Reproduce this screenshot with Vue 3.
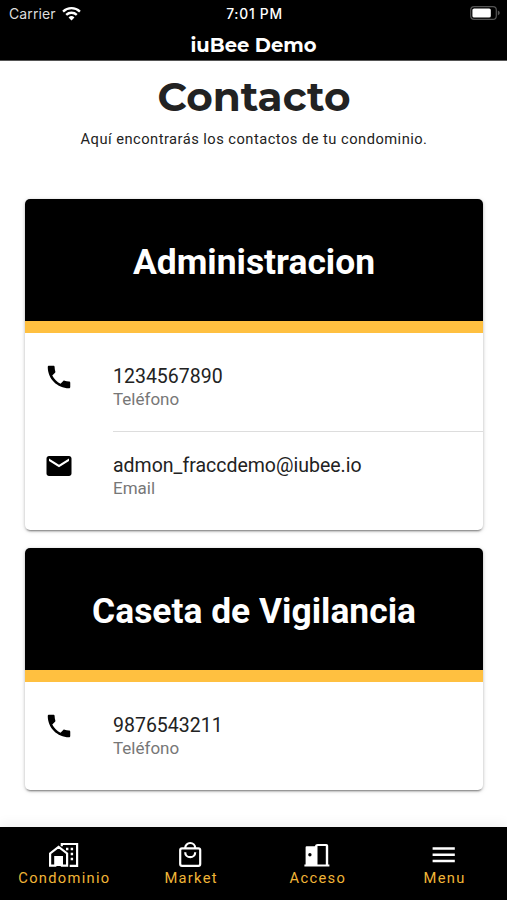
<script setup>
const cards = [
  {
    title: 'Administracion',
    rows: [
      { icon: 'phone', value: '1234567890', label: 'Teléfono' },
      { icon: 'mail', value: 'admon_fraccdemo@iubee.io', label: 'Email' },
    ],
  },
  {
    title: 'Caseta de Vigilancia',
    rows: [{ icon: 'phone', value: '9876543211', label: 'Teléfono' }],
  },
]
const paths = {
  phone: 'M6.62 10.79c1.44 2.83 3.76 5.14 6.59 6.59l2.2-2.2c.27-.27.67-.36 1.02-.24 1.12.37 2.33.57 3.57.57.55 0 1 .45 1 1V20c0 .55-.45 1-1 1C10.61 21 3 13.39 3 4c0-.55.45-1 1-1h3.5c.55 0 1 .45 1 1 0 1.25.2 2.45.57 3.57.11.35.03.74-.25 1.02l-2.2 2.2z',
  mail: 'M20 4H4c-1.1 0-2 .9-2 2v12c0 1.1.9 2 2 2h16c1.1 0 2-.9 2-2V6c0-1.1-.9-2-2-2zm0 4-8 5-8-5V6l8 5 8-5z',
}
const tabs = ['Condominio', 'Market', 'Acceso', 'Menu']
</script>

<template>
  <div class="screen">
    <header class="top">
      <div class="status">
        <div class="carrier">
          <span>Carrier</span>
          <svg class="wifi" viewBox="0 0 18 14">
            <path d="M1 5.2a11.5 11.5 0 0 1 16 0M4 8.3a7.2 7.2 0 0 1 10 0" />
            <path class="dot" d="M6.2 10.8a4 4 0 0 1 5.6 0L9 13.6z" />
          </svg>
        </div>
        <span class="clock">7:01 PM</span>
        <svg class="battery" viewBox="0 0 30 14">
          <rect class="shell" x=".7" y=".7" width="25.6" height="12.6" rx="3.4" />
          <rect class="charge" x="2.4" y="2.4" width="18.4" height="9.2" rx="1.7" />
          <path class="cap" d="M27.8 4.6q2 1 2 2.4t-2 2.4z" />
        </svg>
      </div>
      <div class="brand">iuBee Demo</div>
    </header>

    <main class="content">
      <h1>Contacto</h1>
      <p class="intro">Aquí encontrarás los contactos de tu condominio.</p>
      <section v-for="card in cards" :key="card.title" class="card">
        <h2>{{ card.title }}</h2>
        <div class="rows">
          <div v-for="row in card.rows" :key="row.label" class="row">
            <svg class="icon" viewBox="0 0 24 24"><path :d="paths[row.icon]" /></svg>
            <div class="info">
              <div class="value">{{ row.value }}</div>
              <div class="label">{{ row.label }}</div>
            </div>
          </div>
        </div>
      </section>
    </main>

    <nav class="tabs">
      <a v-for="tab in tabs" :key="tab" class="tab">
        <svg v-if="tab === 'Condominio'" viewBox="0 0 32 28">
          <path class="line" d="M3.1 24.7V12.5l8.5-6.5 8.5 6.5v12.2h-5.2v-8.5H8.3v8.5zM14.8 5.2V3h15.3v21.8h-7.4" />
          <path class="solid" d="M9 17h5.2v8H9zM19 6.8h2.4v2.4H19zm4.7 0h2.4v2.4h-2.4zm0 5h2.4v2.4h-2.4zm0 5h2.4v2.4h-2.4z" />
        </svg>
        <svg v-else-if="tab === 'Market'" viewBox="0 0 32 28">
          <rect class="line" x="6.2" y="7.3" width="20" height="17.6" rx="1.8" />
          <path class="line" d="M11.2 7a5 5 0 0 1 10 0M11.2 11.2a5 5 0 0 0 10 0" />
        </svg>
        <svg v-else-if="tab === 'Acceso'" viewBox="0 0 32 28">
          <path class="solid" fill-rule="evenodd" d="M4.6 6.2q0-1 1-1h8.2q.6-2.2 2.8-2.2h8.8q1.8 0 1.8 1.8v18.6h1.2v2.2H3.4v-2.2h1.2zM16.5 5v18.4h8.3V5zM8.9 12a1.7 1.7 0 1 0 0 3.4 1.7 1.7 0 0 0 0-3.4z" />
        </svg>
        <svg v-else viewBox="0 0 32 28">
          <path class="solid" d="M4.6 6.3h22.2v2.5H4.6zm0 6.2h22.2V15H4.6zm0 6.2h22.2v2.5H4.6z" />
        </svg>
        <span>{{ tab }}</span>
      </a>
    </nav>
  </div>
</template>

<style>
body {
  margin: 0;
  background: #fff;
}
</style>

<style scoped>
.screen {
  display: flex;
  flex-direction: column;
  width: 507px;
  height: 900px;
  overflow: hidden;
  background: #fff;
  color: #222;
  font-family: Roboto, "Liberation Sans", sans-serif;
}
.top {
  flex: none;
  box-sizing: border-box;
  height: 61px;
  background: #000;
  border-bottom: 1px solid #555;
  color: #fff;
}
.status {
  display: grid;
  grid-template-columns: 1fr auto 1fr;
  align-items: center;
  height: 28px;
  padding: 0 7px 0 9px;
  font: 14px/28px Inter, sans-serif;
}
.carrier {
  display: flex;
  align-items: center;
  gap: 6px;
  color: #ddd;
  letter-spacing: 0.1px;
}
.wifi {
  width: 19px;
  height: 15px;
  margin-top: -2px;
  fill: none;
  stroke: #fff;
  stroke-width: 2.2;
}
.wifi .dot {
  fill: #fff;
  stroke: none;
}
.clock {
  font-size: 13.8px;
  font-weight: 500;
  letter-spacing: 0.75px;
}
.battery {
  justify-self: end;
  width: 30px;
  height: 14px;
  margin-top: -2px;
}
.shell {
  fill: none;
  stroke: #555;
  stroke-width: 1.2;
}
.charge {
  fill: #fff;
}
.cap {
  fill: #555;
}
.brand {
  height: 32px;
  text-align: center;
  font: 700 19.5px/35px Montserrat, Inter, sans-serif;
}
.content {
  flex: 1;
  min-height: 0;
  padding: 0 24px 0 25px;
}
h1 {
  margin: 12px 0 0;
  text-align: center;
  font: 700 40.5px/48px Montserrat, Inter, sans-serif;
}
.intro {
  margin: 8px 0 50px;
  text-align: center;
  font-size: 14.7px;
  line-height: 20px;
  letter-spacing: 0.47px;
}
.card {
  margin-bottom: 18px;
  border-radius: 5px;
  overflow: hidden;
  background: #fff;
  box-shadow: 0 3px 2px -2px rgba(0, 0, 0, 0.35), 0 1px 3px rgba(0, 0, 0, 0.25), 0 1px 6px rgba(0, 0, 0, 0.08);
}
h2 {
  margin: 0;
  height: 122px;
  border-bottom: 12px solid #ffc040;
  background: #000;
  color: #fff;
  text-align: center;
  font-size: 35.4px;
  font-weight: 700;
  line-height: 126px;
}
.rows {
  padding: 10px 0;
}
.row {
  display: flex;
  height: 88px;
}
.row + .row {
  height: 89px;
}
.icon {
  flex: none;
  width: 30px;
  height: 30px;
  margin: 19px 35px 0 19px;
}
.row + .row .icon {
  margin-top: 20px;
}
.info {
  flex: 1;
  box-sizing: border-box;
  margin-left: 4px;
  padding-top: 22px;
}
.row + .row .info {
  border-top: 1px solid #ddd;
}
.value {
  font-size: 19.5px;
  line-height: 24px;
}
.label {
  color: #777;
  font-size: 17px;
  line-height: 20px;
}
.tabs {
  flex: none;
  display: grid;
  grid-template-columns: repeat(4, 1fr);
  height: 73px;
  background: #000;
  box-shadow: 0 -3px 12px rgba(0, 0, 0, 0.06);
}
.tab {
  display: flex;
  flex-direction: column;
  align-items: center;
  padding-top: 14px;
  color: #f0b537;
  font-size: 14.7px;
  line-height: 20px;
  letter-spacing: 1.3px;
}
.tab svg {
  width: 32px;
  height: 28px;
  margin-bottom: -1px;
}
.tab span {
  padding-left: 2px;
}
.line {
  fill: none;
  stroke: #fff;
  stroke-width: 2.2;
}
.solid {
  fill: #fff;
}
</style>
